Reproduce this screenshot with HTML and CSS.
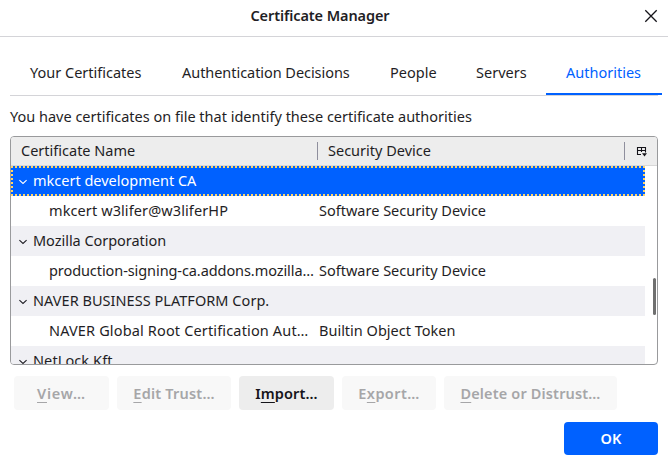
FILE: index.html
```html
<!DOCTYPE html>
<html lang="en">
<head>
<meta charset="utf-8">
<title>Certificate Manager</title>
<link rel="stylesheet" href="styles.css">
</head>
<body>
<header class="titlebar">
  <h1 class="title">Certificate Manager</h1>
  <svg class="close" viewBox="0 0 14 14"><path d="M1.3 1.3 12.7 12.7M12.7 1.3 1.3 12.7"/></svg>
</header>
<main class="content">
  <nav class="tabs">
    <a class="tab tab-yours"><span>Your Certificates</span></a>
    <a class="tab tab-decisions"><span>Authentication Decisions</span></a>
    <a class="tab tab-people"><span>People</span></a>
    <a class="tab tab-servers"><span>Servers</span></a>
    <a class="tab tab-authorities selected"><span>Authorities</span></a>
  </nav>
  <p class="description">You have certificates on file that identify these certificate authorities</p>
  <section class="tree">
    <div class="tree-head">
      <div class="head-name">Certificate Name</div>
      <div class="head-device">Security Device</div>
      <div class="picker"><svg viewBox="0 0 12 12"><path class="grid" d="M6 9.5H2.5V2.5h8V7.5M2.5 5.5h8M6.5 2.5V7"/><path class="arrow" d="M7 8.2h5L9.5 11.4z"/></svg></div>
    </div>
    <div class="tree-body">
      <div class="row group current"><svg class="twisty" viewBox="0 0 10 6"><path d="M1.4 1.2 5 4.5l3.6-3.3"/></svg><span>mkcert development CA</span></div>
      <div class="row"><span class="name n-mkcert">mkcert w3lifer@w3liferHP</span><span class="device">Software Security Device</span></div>
      <div class="row group"><svg class="twisty" viewBox="0 0 10 6"><path d="M1.4 1.2 5 4.5l3.6-3.3"/></svg><span class="g-mozilla">Mozilla Corporation</span></div>
      <div class="row"><span class="name n-signing">production-signing-ca.addons.mozilla…</span><span class="device">Software Security Device</span></div>
      <div class="row group"><svg class="twisty" viewBox="0 0 10 6"><path d="M1.4 1.2 5 4.5l3.6-3.3"/></svg><span class="g-naver">NAVER BUSINESS PLATFORM Corp.</span></div>
      <div class="row"><span class="name n-naver">NAVER Global Root Certification Aut…</span><span class="device">Builtin Object Token</span></div>
      <div class="row group"><svg class="twisty" viewBox="0 0 10 6"><path d="M1.4 1.2 5 4.5l3.6-3.3"/></svg><span class="g-netlock">NetLock Kft.</span></div>
      <div class="thumb"></div>
    </div>
  </section>
  <div class="actions">
    <button class="btn view" disabled><span><u>V</u>iew…</span></button>
    <button class="btn edit" disabled><span><u>E</u>dit Trust…</span></button>
    <button class="btn import"><span>I<u>m</u>port…</span></button>
    <button class="btn export" disabled><span>E<u>x</u>port…</span></button>
    <button class="btn delete" disabled><span><u>D</u>elete or Distrust…</span></button>
  </div>
  <footer class="footer"><button class="btn ok">OK</button></footer>
</main>
</body>
</html>
```
FILE: styles.css
```css
* { box-sizing: border-box; }
body {
  margin: 0;
  height: 462px;
  overflow: hidden;
  background: #fff;
  color: #1f1e25;
  font: 14.5px/20px "Noto Sans", sans-serif;
  white-space: nowrap;
}
.titlebar {
  display: flex;
  align-items: center;
  height: 37px;
  padding: 0 10px 4px 28px;
  border-bottom: 1px solid #d4d4d8;
}
.title { flex: 1; margin: 0; font-size: 14.5px; font-weight: 600; text-align: center; padding: 0 32px 2px 0; letter-spacing: -0.1px; }
.close { width: 14px; height: 14px; fill: none; stroke: #15141a; stroke-width: 1.3; }
.content { padding: 13px 10px 0; }
.tabs { display: flex; height: 46px; border-bottom: 1px solid #d4d4d8; }
.tab { flex: none; padding: 12px 20px 0; height: 45px; }
.tab-yours { width: 152px; }
.tab-decisions { width: 208px; letter-spacing: -0.05px; }
.tab-people { width: 86px; }
.tab-servers { width: 90px; }
.tab-authorities { width: 116px; }
.selected { color: #0061ff; border-bottom: 2px solid #0061ff; }
.description { margin: 10px 0; }
.tree {
  height: 229px;
  overflow: hidden;
  border: 1px solid #999a9c;
  border-radius: 4px;
}
.tree-head {
  display: flex;
  align-items: center;
  height: 29px;
  background: #ededed;
  border-bottom: 1px solid #d8d8d8;
}
.head-name, .head-device { width: 307px; height: 18px; padding-left: 10px; border-right: 1px solid #8f8f9d; line-height: 16px; }
.picker { display: flex; margin-left: 10px; }
.picker svg { width: 12px; height: 12px; }
.grid { fill: none; stroke: #15141a; stroke-width: 1.1; }
.arrow { fill: #15141a; }
.tree-body { position: relative; }
.row { display: flex; align-items: center; width: 634px; height: 30px; padding: 0 0 2px 38px; }
.group { padding-left: 7px; background: #f0f0f4; }
.current {
  color: #fff;
  background:
    repeating-linear-gradient(90deg, #ffd567 0 2px, #0061ff 2px 4px) top / 100% 2px no-repeat,
    repeating-linear-gradient(90deg, #ffd567 0 2px, #0061ff 2px 4px) bottom / 100% 2px no-repeat,
    repeating-linear-gradient(#ffd567 0 2px, #0061ff 2px 4px) left / 2px 100% no-repeat,
    repeating-linear-gradient(#ffd567 0 2px, #0061ff 2px 4px) right / 2px 100% no-repeat,
    #0061ff;
}
.twisty { width: 10px; height: 6px; margin: 3px 5px 0 0; fill: none; stroke: currentColor; stroke-width: 1.1; }
.name { width: 270px; }
.n-mkcert { letter-spacing: 0.1px; }
.n-signing { letter-spacing: -0.08px; }
.n-naver { letter-spacing: 0.15px; }
.g-mozilla { letter-spacing: -0.04px; }
.g-naver { letter-spacing: 0.04px; }
.g-netlock { letter-spacing: 0.1px; }
.thumb { position: absolute; top: 112px; right: 1px; width: 3px; height: 37px; border-radius: 2px; background: #6f6f6f; }
.actions { display: flex; gap: 8px; padding: 11px 4px 0; }
.btn {
  height: 34px;
  padding: 0 0 1px;
  border: 0;
  border-radius: 4px;
  background: #ededed;
  color: #15141a;
  font: 600 14.5px/20px "Noto Sans", sans-serif;
}
.btn:disabled { background: #f8f8f8; color: #a6a6a8; }
.btn u { text-underline-offset: 3px; text-decoration-thickness: 1px; }
.view { width: 95px; letter-spacing: 0.8px; }
.edit { width: 114px; letter-spacing: 0.2px; }
.import { width: 95px; letter-spacing: 0.1px; }
.export { width: 94px; letter-spacing: 0.4px; }
.delete { width: 173px; letter-spacing: 0.15px; }
.footer { display: flex; justify-content: flex-end; padding-top: 12px; }
.ok { width: 94px; height: 33px; padding-bottom: 2px; background: #0061ff; color: #fff; }
```
